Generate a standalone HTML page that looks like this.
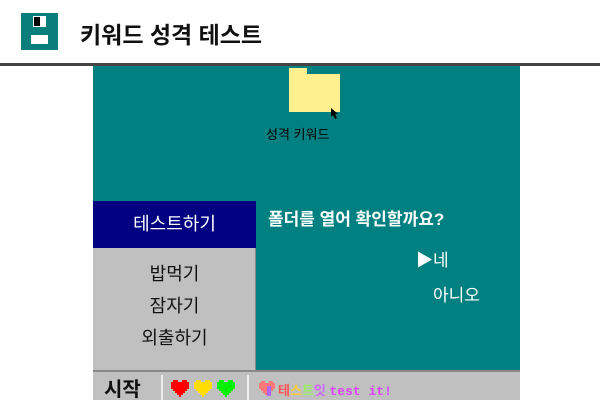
<!DOCTYPE html>
<html><head><meta charset="utf-8"><style>
*{margin:0;padding:0;box-sizing:border-box}
body{width:600px;height:400px;background:#fff;position:relative;overflow:hidden;font-family:"Liberation Sans","Noto Sans CJK KR","NanumGothic",sans-serif}
.a{position:absolute;white-space:nowrap}
</style></head><body>
<svg class="a" style="left:21px;top:13px" width="37" height="37" viewBox="0 0 37 37">
<rect width="37" height="37" fill="#087f7a"/>
<rect x="12" y="3" width="13" height="11" fill="#fff"/><rect x="13" y="4" width="6" height="9" fill="#000"/>
<rect x="10" y="22" width="17" height="9" fill="#fff"/></svg>
<div class="a" style="left:80px;top:16px;font-size:23px;font-weight:bold;color:#111">키워드 성격 테스트</div>
<div class="a" style="left:0;top:63px;width:600px;height:3px;background:#444"></div>
<div class="a" style="left:93px;top:66px;width:427px;height:304px;background:#008080"></div>
<svg class="a" style="left:288px;top:66px" width="60" height="55" viewBox="0 0 60 55">
<path d="M1 2H19V8H52V46H1Z" fill="#fff08f"/>
<path d="M43 42l0 9 2-2 2 4 2-1-2-4 3 0z" fill="#000"/></svg>
<div class="a" style="left:266px;top:124px;font-size:13px;color:#000">성격 키워드</div>
<div class="a" style="left:93px;top:201px;width:163px;height:47px;background:#000080;color:#fff;font-size:18px;text-align:center;line-height:47px">테스트하기</div>
<div class="a" style="left:93px;top:248px;width:163px;height:122px;background:#c0c0c0;border-right:1px solid #888"></div>
<div class="a" style="left:93px;top:258px;width:163px;text-align:center;font-size:18px;line-height:32px;color:#111">밥먹기<br>잠자기<br>외출하기</div>
<div class="a" style="left:268px;top:205px;font-size:17px;font-weight:bold;color:#fff">폴더를 열어 확인할까요?</div>
<div class="a" style="left:416px;top:246px;font-size:17px;color:#fff">▶네</div>
<div class="a" style="left:433px;top:281px;font-size:17px;color:#fff">아니오</div>
<div class="a" style="left:93px;top:370px;width:427px;height:30px;background:#c0c0c0;border-top:2px solid #888"></div>
<div class="a" style="left:104px;top:373px;font-size:20px;font-weight:bold;color:#111">시작</div>
<div class="a" style="left:161px;top:375px;width:2px;height:25px;background:#eee"></div>
<div class="a" style="left:247px;top:375px;width:2px;height:25px;background:#eee"></div>
<svg class="a" style="left:171px;top:380px" width="70" height="18" viewBox="0 0 70 18">
<defs><path id="h" d="M2 0H7V2H11V0H16V2H18V9H16V11H14V13H12V15H10V17H8V15H6V13H4V11H2V9H0V2H2Z"/></defs>
<use href="#h" fill="#f00"/><use href="#h" x="23" fill="#fd0"/><use href="#h" x="46" fill="#0e0"/></svg>
<svg class="a" style="left:259px;top:381px" width="16" height="16" viewBox="0 0 16 16"><path d="M2 0H6V2H10V0H14V2H16V8H14V10H12V12H10V14H6V12H4V10H2V8H0V2H2Z" fill="#f77"/><rect x="8" y="5" width="4" height="10" fill="#a6f"/></svg>
<div class="a" style="left:278px;top:380px;font-size:13px;font-weight:bold"><span style="color:#f55">테</span><span style="color:#fc3">스</span><span style="color:#9e6">트</span><span style="color:#c6f">잇</span> <span style="color:#d4f;font-family:'Liberation Mono',monospace">test it!</span></div>
</body></html>
